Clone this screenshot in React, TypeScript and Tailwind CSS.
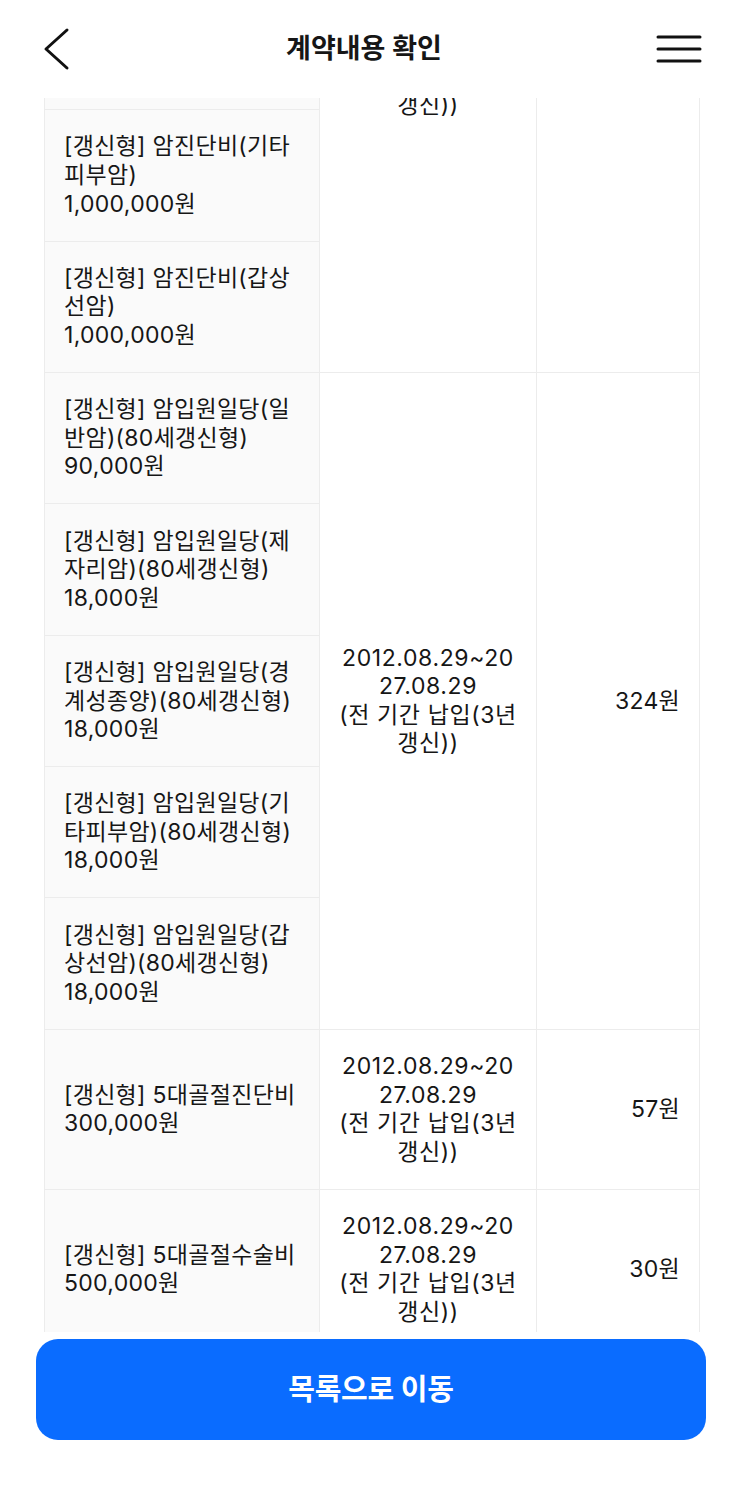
import React from "react";

type Group = {
  items: string[][];
  date: string[];
  premium: string;
  datePad?: string;
};

const groups: Group[] = [
  {
    items: [
      ["[갱신형] 암진단비(일반", "암)", "10,000,000원"],
      ["[갱신형] 암진단비(제자", "리암)", "2,000,000원"],
      ["[갱신형] 암진단비(경계", "성종양)", "2,000,000원"],
      ["[갱신형] 암진단비(기타", "피부암)", "1,000,000원"],
      ["[갱신형] 암진단비(갑상", "선암)", "1,000,000원"],
    ],
    date: ["2012.08.29~20", "27.08.29", "(전 기간 납입(3년", "갱신))"],
    premium: "1,208원",
    datePad: "pt-[60px]",
  },
  {
    items: [
      ["[갱신형] 암입원일당(일", "반암)(80세갱신형)", "90,000원"],
      ["[갱신형] 암입원일당(제", "자리암)(80세갱신형)", "18,000원"],
      ["[갱신형] 암입원일당(경", "계성종양)(80세갱신형)", "18,000원"],
      ["[갱신형] 암입원일당(기", "타피부암)(80세갱신형)", "18,000원"],
      ["[갱신형] 암입원일당(갑", "상선암)(80세갱신형)", "18,000원"],
    ],
    date: ["2012.08.29~20", "27.08.29", "(전 기간 납입(3년", "갱신))"],
    premium: "324원",
  },
  {
    items: [["[갱신형] 5대골절진단비", "300,000원"]],
    date: ["2012.08.29~20", "27.08.29", "(전 기간 납입(3년", "갱신))"],
    premium: "57원",
  },
  {
    items: [["[갱신형] 5대골절수술비", "500,000원"]],
    date: ["2012.08.29~20", "27.08.29", "(전 기간 납입(3년", "갱신))"],
    premium: "30원",
  },
  {
    items: [["[갱신형] 골절진단비(치아", "파절제외)", "100,000원"]],
    date: ["2012.08.29~20", "27.08.29", "(전 기간 납입(3년", "갱신))"],
    premium: "42원",
  },
];

function Lines({ lines }: { lines: string[] }) {
  return (
    <>
      {lines.map((l, i) => (
        <span key={i} className="block whitespace-nowrap">
          {l}
        </span>
      ))}
    </>
  );
}

export default function App() {
  return (
    <div
      className="w-[742px] h-[1500px] bg-white flex flex-col overflow-hidden text-[#161616]"
      style={{ fontFamily: 'Inter, "Noto Sans CJK KR", "Noto Sans", sans-serif' }}
    >
      {/* Header */}
      <header className="h-[98px] shrink-0 flex items-center justify-between pl-[42px] pr-[40px] bg-white relative z-10">
        <svg width="30" height="44" viewBox="0 0 30 44" className="block">
          <path
            d="M25 3 L4 22 L25 41"
            fill="none"
            stroke="#111"
            strokeWidth="3"
            strokeLinecap="round"
            strokeLinejoin="round"
          />
        </svg>
        <h1 className="text-[27px] font-semibold tracking-[0px] leading-none -mt-[2px]">
          계약내용 확인
        </h1>
        <svg width="46" height="30" viewBox="0 0 46 30" className="block">
          <path
            d="M2 3 H44 M2 15 H44 M2 27 H44"
            fill="none"
            stroke="#111"
            strokeWidth="3"
            strokeLinecap="round"
          />
        </svg>
      </header>

      {/* Scroll area */}
      <div className="h-[1234px] shrink-0 overflow-hidden">
        <div className="mt-[-382px] ml-[44px] w-[655px] border-l border-[#ececec] text-[23px] leading-[28.6px] tracking-[0.3px]">
          {groups.map((g, gi) => (
            <div key={gi} className="grid grid-cols-[275px_217px_163px]">
              <div className="flex flex-col border-r border-[#ececec] bg-[#fafafa]">
                {g.items.map((it, ii) => (
                  <div
                    key={ii}
                    className="flex-1 flex items-center px-[19px] py-[22.3px] border-b border-[#ececec]"
                  >
                    <div>
                      <Lines lines={it} />
                    </div>
                  </div>
                ))}
              </div>
              <div
                className={`flex items-center justify-center text-center border-r border-b border-[#ececec] py-[22.3px] tracking-[0.6px] ${g.datePad ?? ""}`}
              >
                <div>
                  <Lines lines={g.date} />
                </div>
              </div>
              <div className="flex items-center justify-end pr-[19px] border-r border-b border-[#ececec]">
                {g.premium}
              </div>
            </div>
          ))}
        </div>
      </div>

      {/* Bottom button */}
      <div className="pt-[7px] px-[36px]">
        <button className="w-full h-[101px] rounded-[22px] bg-[#0a6cff] text-white text-[29px] font-semibold tracking-[-0.3px] flex items-center justify-center">
          목록으로 이동
        </button>
      </div>
    </div>
  );
}
